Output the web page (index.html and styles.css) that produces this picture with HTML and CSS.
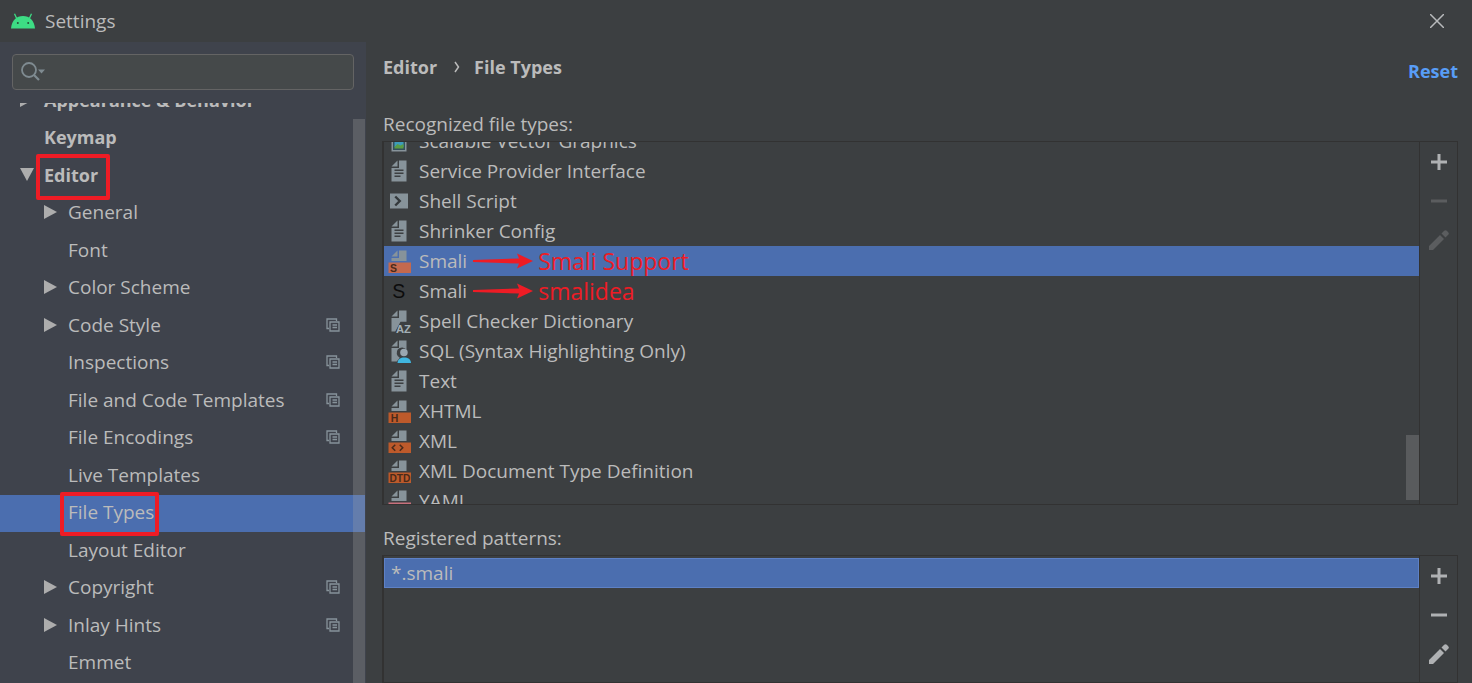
FILE: index.html
```
<!DOCTYPE html>
<html lang="en">
<head>
<meta charset="utf-8">
<title>Settings</title>
<link rel="stylesheet" href="styles.css">
</head>
<body>
<svg class="defs" aria-hidden="true">
  <defs>
    <symbol id="copy" viewBox="0 0 14 14"><path d="M3 10.500H1V1h9.500v2M4 4h9v9H4zM6.500 7h4.500M6.500 9.500h4.500" fill="none" stroke="#87939a" stroke-width="1.300"/></symbol>
    <symbol id="fold" viewBox="0 0 16 16"><path d="M7 1 3 5h4z" fill="#87939a"/><path d="M8 1v5H3v2h10V1z" fill="#87939a"/></symbol>
    <symbol id="page" viewBox="0 0 16 16"><path d="M7 1 3 5h4z" fill="#87939a"/><path fill-rule="evenodd" d="M8 1v5H3v9h10V1zM5 7h6v1H5zM5 9h6v1H5zM5 11h4v1H5z" fill="#87939a"/></symbol>
    <symbol id="image" viewBox="0 0 16 16"><path d="M3 1h10v14H3z" fill="#87939a"/><path d="M4 3h8v11H4z" fill="#34505c"/><path d="M5 4h6v8H5z" fill="#3d9cba"/><path d="M5 12l2-2 2 1 2-1v3H5z" fill="#5a9d45"/></symbol>
    <symbol id="shell" viewBox="0 0 16 16"><path d="M2 3h12v10H2z" fill="#87939a"/><path d="M5.500 5 8.500 8l-3 3" fill="none" stroke="#34393c" stroke-width="1.600"/></symbol>
    <symbol id="az" viewBox="0 0 16 16"><path d="M7 1 3 5h4z" fill="#87939a"/><path d="M8 1v5H3v9h2.500L9 8.500h4V1z" fill="#87939a"/><text x="6" y="16" font-size="7.500" font-weight="700" fill="#a3afb6">AZ</text></symbol>
    <symbol id="sql" viewBox="0 0 16 16"><path d="M7 1 3 5h4z" fill="#87939a"/><path d="M8 1v5H3v9h3.500l2-2.500a3.600 3.600 0 1 1 4.500-5.300V1z" fill="#87939a"/><circle cx="11.300" cy="9" r="2.500" fill="#9aa7b0"/><path d="M7 16c.2-2.500 2-3.600 4.500-3.600S15.800 13.500 16 16z" fill="#40b6e0"/></symbol>
    <symbol id="plus" viewBox="0 0 16 16"><path d="M6.500 0h3v6.500H16v3H9.500V16h-3V9.500H0v-3h6.500z" fill="currentColor"/></symbol>
    <symbol id="minus" viewBox="0 0 16 16"><path d="M0 6.500h16v3H0z" fill="currentColor"/></symbol>
    <symbol id="pencil" viewBox="0 0 20 20"><path d="M0 16 11 5l4 4L4 20H0zM12.500 3.500l2.700-2.700q1.300-1.300 2.600 0l1.400 1.400q1.300 1.300 0 2.600l-2.700 2.700z" fill="currentColor"/></symbol>
    <symbol id="arrow" viewBox="0 0 60 16"><path d="M0 7 46 5.500 44 .5 60 8l-16 7.500 2-5L0 9z" fill="#ee1c25"/></symbol>
  </defs>
</svg>

<header class="titlebar">
  <svg class="android" viewBox="0 0 24 16"><path d="M0 15.500C.6 7.500 5.500 3 12 3s11.400 4.500 12 12.500z" fill="#3ddc84"/><path d="M5.700 5.500 3.500.7M18.300 5.500 20.500.7" stroke="#3ddc84" stroke-width="1.300"/><circle cx="6.800" cy="10" r="1" fill="#274d38"/><circle cx="17.200" cy="10" r="1" fill="#274d38"/></svg>
  <h1 class="title">Settings</h1>
  <button class="close" aria-label="Close"><svg viewBox="0 0 14 14"><path d="M0 0 14 14M14 0 0 14" stroke="#b8babc" stroke-width="1.500"/></svg></button>
</header>

<div class="window">
  <aside class="sidebar">
    <div class="search">
      <svg class="glass" viewBox="0 0 26 20"><circle cx="8" cy="8" r="7" fill="none" stroke="#7f8b91" stroke-width="1.800"/><path d="m13 13 5 5" stroke="#7f8b91" stroke-width="2.200"/><path d="M17 7.500h7l-3.500 4z" fill="#7f8b91"/></svg>
      <input type="text" aria-label="Search settings">
    </div>
    <nav class="tree">
      <ul class="nodes">
        <li class="node top"><span class="twist closed"></span><a href="#">Appearance &amp; Behavior</a></li>
        <li class="node top"><span class="twist"></span><a href="#">Keymap</a></li>
        <li class="node top"><span class="twist open"></span><a href="#" class="boxed">Editor</a></li>
        <li class="node"><span class="twist closed"></span><a href="#">General</a></li>
        <li class="node"><span class="twist"></span><a href="#">Font</a></li>
        <li class="node"><span class="twist closed"></span><a href="#">Color Scheme</a></li>
        <li class="node"><span class="twist closed"></span><a href="#">Code Style</a><svg class="scope"><use href="#copy"/></svg></li>
        <li class="node"><span class="twist"></span><a href="#">Inspections</a><svg class="scope"><use href="#copy"/></svg></li>
        <li class="node"><span class="twist"></span><a href="#">File and Code Templates</a><svg class="scope"><use href="#copy"/></svg></li>
        <li class="node"><span class="twist"></span><a href="#">File Encodings</a><svg class="scope"><use href="#copy"/></svg></li>
        <li class="node"><span class="twist"></span><a href="#">Live Templates</a></li>
        <li class="node current"><span class="twist"></span><a href="#" class="boxed" aria-current="page">File Types</a></li>
        <li class="node"><span class="twist"></span><a href="#">Layout Editor</a></li>
        <li class="node"><span class="twist closed"></span><a href="#">Copyright</a><svg class="scope"><use href="#copy"/></svg></li>
        <li class="node"><span class="twist closed"></span><a href="#">Inlay Hints</a><svg class="scope"><use href="#copy"/></svg></li>
        <li class="node"><span class="twist"></span><a href="#">Emmet</a></li>
      </ul>
      <div class="tree-thumb"></div>
    </nav>
  </aside>

  <main class="content">
    <div class="heading">
      <h2 class="crumbs"><span>Editor</span><svg class="chevron" viewBox="0 0 6 12"><path d="M1 1l3.500 5L1 11" fill="none" stroke="#bbb" stroke-width="1.500"/></svg><span>File Types</span></h2>
      <a href="#" class="reset">Reset</a>
    </div>

    <h3 class="label" id="types-label">Recognized file types:</h3>
    <section class="panel types">
      <div class="list">
        <ul class="items scrolled" role="listbox" aria-labelledby="types-label">
          <li class="item" role="option"><svg class="icon"><use href="#image"/></svg>Scalable Vector Graphics</li>
          <li class="item" role="option"><svg class="icon"><use href="#page"/></svg>Service Provider Interface</li>
          <li class="item" role="option"><svg class="icon"><use href="#shell"/></svg>Shell Script</li>
          <li class="item" role="option"><svg class="icon"><use href="#page"/></svg>Shrinker Config</li>
          <li class="item selected" role="option" aria-selected="true"><svg class="icon" viewBox="0 0 16 16"><use href="#fold"/><path d="M1 9h15v7H1z" fill="#c4694e"/><text class="mark" x="2" y="15.200" font-size="7">S</text></svg>Smali<span class="note"><svg class="arrow"><use href="#arrow"/></svg>Smali Support</span></li>
          <li class="item" role="option"><svg class="icon" viewBox="0 0 16 16"><text x="3.500" y="12.500" font-size="13" fill="#0c0c0c">S</text></svg>Smali<span class="note"><svg class="arrow"><use href="#arrow"/></svg>smalidea</span></li>
          <li class="item" role="option"><svg class="icon"><use href="#az"/></svg>Spell Checker Dictionary</li>
          <li class="item" role="option"><svg class="icon"><use href="#sql"/></svg>SQL (Syntax Highlighting Only)</li>
          <li class="item" role="option"><svg class="icon"><use href="#page"/></svg>Text</li>
          <li class="item" role="option"><svg class="icon" viewBox="0 0 16 16"><use href="#fold"/><path d="M1 9h15v7H1z" fill="#bd5a2b"/><text class="mark" x="2.500" y="15" font-size="7">H</text></svg>XHTML</li>
          <li class="item" role="option"><svg class="icon" viewBox="0 0 16 16"><use href="#fold"/><path d="M1 9h15v7H1z" fill="#bd5a2b"/><path d="M5.500 10.500 3.500 12.500l2 2M8.500 10.500l2 2-2 2" fill="none" stroke="#4a2a1a"/></svg>XML</li>
          <li class="item" role="option"><svg class="icon" viewBox="0 0 16 16"><use href="#fold"/><path d="M1 9h15v7H1z" fill="#bd5a2b"/><text class="mark" x="1.600" y="15" font-size="6.800">DTD</text></svg>XML Document Type Definition</li>
          <li class="item" role="option"><svg class="icon" viewBox="0 0 16 16"><use href="#fold"/><path d="M1 9h15v7H1z" fill="#c7707c"/></svg>YAML</li>
        </ul>
        <div class="list-thumb"></div>
      </div>
      <div class="tools">
        <button class="tool" aria-label="Add file type"><svg class="sign"><use href="#plus"/></svg></button>
        <button class="tool" aria-label="Remove file type" disabled><svg class="sign"><use href="#minus"/></svg></button>
        <button class="tool" aria-label="Edit file type" disabled><svg class="pencil"><use href="#pencil"/></svg></button>
      </div>
    </section>

    <h3 class="label second" id="patterns-label">Registered patterns:</h3>
    <section class="panel patterns">
      <div class="list">
        <ul class="items" role="listbox" aria-labelledby="patterns-label">
          <li class="item pattern selected" role="option" aria-selected="true">*.smali</li>
        </ul>
      </div>
      <div class="tools">
        <button class="tool" aria-label="Add pattern"><svg class="sign"><use href="#plus"/></svg></button>
        <button class="tool" aria-label="Remove pattern"><svg class="sign"><use href="#minus"/></svg></button>
        <button class="tool" aria-label="Edit pattern"><svg class="pencil"><use href="#pencil"/></svg></button>
      </div>
    </section>
  </main>
</div>
</body>
</html>
```
FILE: styles.css
```
* { box-sizing: border-box; }
body {
  margin: 0;
  height: 100vh;
  display: flex;
  flex-direction: column;
  overflow: hidden;
  background: #3c3f41;
  color: #bbbbbb;
  font: 19px/30px "Open Sans", "Noto Sans", sans-serif;
}
h1, h2, h3, ul { margin: 0; padding: 0; font-size: inherit; font-weight: 400; }
ul { list-style: none; }
a { color: inherit; text-decoration: none; }
button { border: 0; padding: 0; background: none; color: #afb1b3; }
svg { display: block; flex: none; }
.defs { position: absolute; width: 0; height: 0; }

.titlebar {
  flex: none;
  display: flex;
  align-items: center;
  height: 42px;
  padding: 0 28px 0 11px;
}
.android { width: 24px; height: 16px; }
.title { margin-left: 10px; }
.close { margin-left: auto; }
.close svg { width: 14px; height: 14px; }

.window { flex: 1; display: flex; min-height: 0; }
.sidebar {
  flex: none;
  width: 366px;
  display: flex;
  flex-direction: column;
  background: #3f434c;
}
.search {
  flex: none;
  display: flex;
  align-items: center;
  height: 36px;
  margin: 12px 12px 13px;
  padding-left: 8px;
  background: #45494a;
  border: 1px solid #646464;
  border-radius: 4px;
}
.glass { width: 26px; height: 20px; }
.search input {
  flex: 1;
  min-width: 0;
  border: 0;
  outline: 0;
  background: none;
  color: inherit;
  font: inherit;
}
.tree { flex: 1; position: relative; min-height: 0; overflow: hidden; }
.nodes { margin-top: -21px; }
.node {
  display: flex;
  align-items: center;
  height: 37px;
  padding: 0 26px 3px 44px;
}
.node:nth-child(odd) { height: 38px; }
.node.top { padding-left: 20px; font-size: 18px; font-weight: 700; }
.twist { flex: none; width: 24px; }
.twist::before { content: ""; display: block; width: 0; }
.closed::before { border: solid transparent; border-width: 7px 0 7px 13px; border-left-color: #adadad; }
.open::before { border: solid transparent; border-width: 13px 7px 0; border-top-color: #adadad; }
.scope { width: 14px; height: 14px; margin-left: auto; }
.current { background: #4b6eaf; }
.boxed { position: relative; }
.boxed::after {
  content: "";
  position: absolute;
  inset: -6px -12px -10px -8px;
  border: 4px solid #ee1c25;
  border-radius: 2px;
}
.current .boxed::after { inset: -5px -5px -9px -8px; }
.tree-thumb {
  position: absolute;
  top: 16px;
  right: 0;
  bottom: 0;
  width: 13px;
  background: rgba(166, 166, 166, 0.28);
  border-right: 1px solid #3f434c;
}

.content {
  flex: 1;
  min-width: 0;
  display: flex;
  flex-direction: column;
  padding: 6px 14px 0 17px;
}
.heading {
  display: flex;
  align-items: center;
  justify-content: space-between;
  font-size: 18px;
}
.crumbs { display: flex; align-items: center; font-weight: 700; }
.chevron { width: 6px; height: 12px; margin: 0 14px 0 17px; }
.reset { margin-top: 8px; color: #589df6; font-weight: 700; }
.label { margin-top: 23px; height: 32px; }
.label.second { margin-top: 18px; }
.panel {
  display: flex;
  margin-left: -1px;
  border: 1px solid #323232;
  border-left-width: 2px;
}
.types { height: 364px; flex: none; }
.patterns { flex: 1; }
.list { position: relative; flex: 1; min-width: 0; overflow: hidden; }
.scrolled { margin-top: -16px; }
.item {
  display: flex;
  align-items: center;
  gap: 8px;
  height: 30px;
  padding-left: 3px;
}
.selected { background: #4b6eaf; }
.pattern { margin-top: 2px; padding-left: 6px; border: 1px solid #5e81c5; }
.icon { width: 24px; height: 24px; }
.icon, #az { font-family: "Liberation Sans", sans-serif; }
.mark { font-weight: 700; fill: #4a2a1a; }
.note {
  display: flex;
  align-items: center;
  gap: 5px;
  margin-left: -2px;
  color: #ee1c25;
  font-size: 23px;
}
.arrow { width: 60px; height: 16px; }
.list-thumb {
  position: absolute;
  right: 0;
  bottom: 4px;
  width: 13px;
  height: 65px;
  background: #595b5d;
}
.tools {
  flex: none;
  width: 38px;
  border-left: 1px solid #323232;
  display: flex;
  flex-direction: column;
  align-items: center;
}
.tool { display: grid; place-items: center; width: 36px; height: 39px; }
.tool:disabled { color: #5b5d5f; }
.sign { width: 16px; height: 16px; }
.pencil { width: 20px; height: 20px; }
```
